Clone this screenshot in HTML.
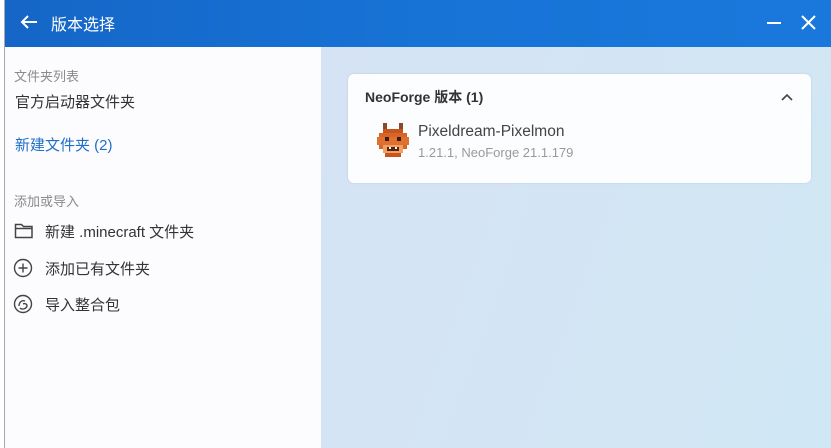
<!DOCTYPE html>
<html><head><meta charset="utf-8"><style>
*{margin:0;padding:0;box-sizing:border-box}
body{width:831px;height:448px;overflow:hidden;background:#fff;position:relative;font-family:"Liberation Sans","Noto Sans CJK SC",sans-serif}
.line{position:absolute;left:4px;top:0;width:1px;height:448px;background:#a8a8a8}
.hdr{position:absolute;left:5px;top:0;width:826px;height:47px;background:linear-gradient(90deg,#1566c6,#1773d6 50%,#1a78dc);color:#fff}
.hdr .t{position:absolute;left:46px;top:11px;font-size:16px}
.left{position:absolute;left:5px;top:47px;width:316px;height:401px;background:#fcfcfe}
.right{position:absolute;left:321px;top:47px;width:510px;height:401px;background:linear-gradient(110deg,#d5e3f4,#d2e6f4 70%,#d0e8f5)}
.sm{position:absolute;font-size:13px;color:#8a8a8a}
.it{position:absolute;font-size:15px;color:#333}
.card{position:absolute;left:348px;top:74px;width:463px;height:109px;background:#fcfdfe;border-radius:6px;box-shadow:0 0 2px rgba(0,0,0,.12)}
</style></head><body>
<div class="line"></div>
<div class="hdr">
<svg style="position:absolute;left:15px;top:14px" width="18" height="16" viewBox="0 0 18 16"><path d="M17 8H2M8 2L2 8l6 6" stroke="#fff" stroke-width="2" fill="none"/></svg>
<div class="t">版本选择</div>
<div style="position:absolute;left:762px;top:22px;width:14px;height:2px;background:#fff"></div>
<svg style="position:absolute;left:796px;top:15px" width="15" height="15" viewBox="0 0 15 15"><path d="M1 1l13 13M14 1L1 14" stroke="#fff" stroke-width="2"/></svg>
</div>
<div class="left"></div>
<div class="right"></div>
<div class="sm" style="left:14px;top:66px">文件夹列表</div>
<div class="it" style="left:15px;top:91px">官方启动器文件夹</div>
<div class="it" style="left:15px;top:134px;color:#1f6fc8">新建文件夹 (2)</div>
<div class="sm" style="left:14px;top:191px">添加或导入</div>
<svg style="position:absolute;left:14px;top:222px" width="20" height="18" viewBox="0 0 20 18"><path d="M1.5 2.5h6l2 2h8.5v11h-16.5z M1.5 6.5h16.5" stroke="#444" stroke-width="1.5" fill="none"/></svg>
<div class="it" style="left:45px;top:221px">新建 .minecraft 文件夹</div>
<svg style="position:absolute;left:13px;top:258px" width="20" height="20" viewBox="0 0 20 20"><circle cx="10" cy="10" r="8.5" stroke="#444" stroke-width="1.4" fill="none"/><path d="M10 5.5v9M5.5 10h9" stroke="#444" stroke-width="1.4"/></svg>
<div class="it" style="left:45px;top:258px">添加已有文件夹</div>
<svg style="position:absolute;left:13px;top:294px" width="20" height="20" viewBox="0 0 20 20"><circle cx="10" cy="10" r="8.5" stroke="#444" stroke-width="1.4" fill="none"/><path d="M6 12c0-4 3-6 6-5M7 14c2 2 6 1 7-2 0-2-2-3-4-2" stroke="#444" stroke-width="1.4" fill="none"/></svg>
<div class="it" style="left:45px;top:294px">导入整合包</div>
<div class="card">
<div style="position:absolute;left:17px;top:13px;font-size:14px;font-weight:bold;color:#333">NeoForge 版本 (1)</div>
<svg style="position:absolute;left:433px;top:19px" width="12" height="8" viewBox="0 0 12 8"><path d="M1 7l5-5 5 5" stroke="#444" stroke-width="1.6" fill="none"/></svg>
<svg style="position:absolute;left:29px;top:49px" width="32" height="36" viewBox="0 0 16 18" shape-rendering="crispEdges">
<rect x="3" y="0" width="2" height="3" fill="#8a4a2a"/><rect x="11" y="0" width="2" height="3" fill="#8a4a2a"/>
<rect x="3" y="3" width="10" height="2" fill="#c8541e"/>
<rect x="1" y="5" width="14" height="8" fill="#d9642a"/>
<rect x="0" y="7" width="16" height="4" fill="#e0702e"/>
<rect x="4" y="7" width="2" height="2" fill="#3a1a10"/><rect x="10" y="7" width="2" height="2" fill="#3a1a10"/>
<rect x="3" y="11" width="10" height="4" fill="#f0a060"/>
<rect x="5" y="12" width="6" height="2" fill="#5a2010"/>
<rect x="6" y="12" width="1" height="1" fill="#fff"/><rect x="9" y="12" width="1" height="1" fill="#fff"/>
<rect x="4" y="15" width="8" height="2" fill="#c8541e"/>
</svg>
<div style="position:absolute;left:70px;top:49px;font-size:15.5px;color:#444">Pixeldream-Pixelmon</div>
<div style="position:absolute;left:70px;top:71px;font-size:13px;color:#999">1.21.1, NeoForge 21.1.179</div>
</div>
</body></html>
